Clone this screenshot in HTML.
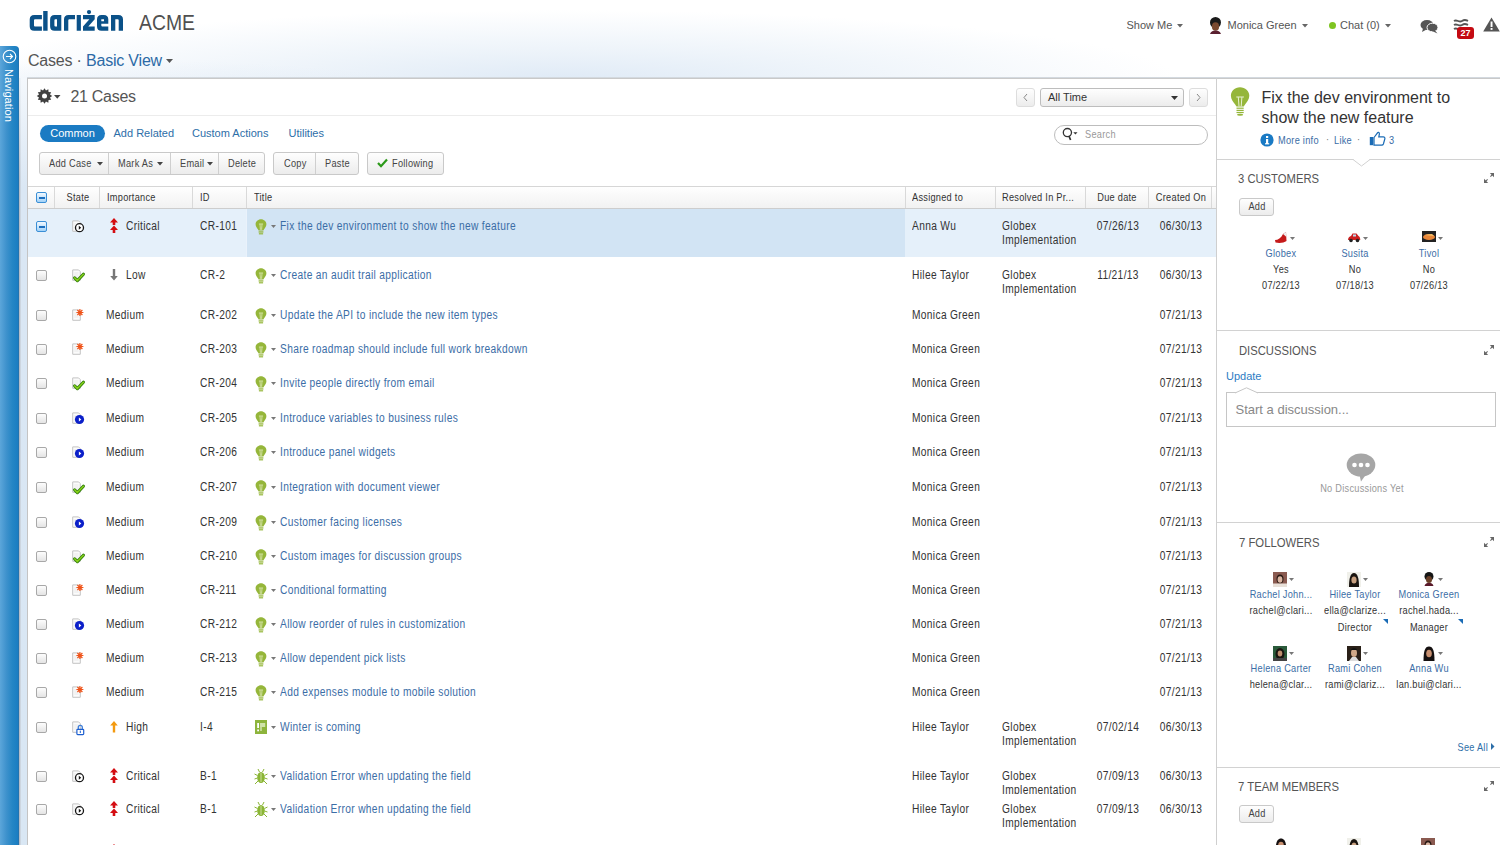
<!DOCTYPE html><html><head><meta charset="utf-8"><style>
html,body{margin:0;padding:0;}
body{width:1500px;height:845px;overflow:hidden;position:relative;background:#fff;font-family:"Liberation Sans", sans-serif;}
.a{position:absolute;}
.t{white-space:nowrap;}
.cb{position:absolute;width:9px;height:9px;border:1px solid #a8a8a8;border-radius:2px;background:linear-gradient(#fdfdfd,#e4e4e4);}
.btn{position:absolute;border:1px solid #c9c9c9;border-radius:3px;background:linear-gradient(#fefefe,#ececec);box-sizing:border-box;}
</style></head><body>
<div class="a" style="left:0px;top:0px;width:1500px;height:78px;background:radial-gradient(ellipse 620px 70px at 560px 80px, #dfeaf6 0%, #eef4fa 45%, rgba(255,255,255,0) 100%);"></div>
<div class="a" style="left:0px;top:30px;width:1500px;height:48px;background:radial-gradient(ellipse 380px 50px at 120px 80px, rgba(223,234,246,0.9) 0%, rgba(255,255,255,0) 100%);"></div>
<div class="a" style="left:19px;top:78px;width:8px;height:767px;background:linear-gradient(#f4f8fc 0px,#dae7f4 110px,#d9e7f4 100%);"></div>
<div class="a" style="left:19px;top:78px;width:1px;height:767px;background:linear-gradient(#e8eef4 0px,#b4bdc8 100px);"></div>
<div class="a" style="left:20px;top:78px;width:1px;height:767px;background:linear-gradient(#eef3f8 0px,#cdd6e0 100px);"></div>
<div class="a" style="left:0px;top:46px;width:19px;height:799px;background:linear-gradient(90deg,#5ca6da 0%,#3d91cc 35%,#2586c5 65%,#1a7dc2 95%,#2d6a9a 100%);border-top-right-radius:4px;"></div>
<svg class="a" style="left:2px;top:49px" width="15" height="15" viewBox="0 0 15 15"><circle cx="7.5" cy="7.5" r="6.3" fill="none" stroke="#fff" stroke-width="1.1"/><path d="M4 7.5h6.5M8 5l2.5 2.5L8 10" fill="none" stroke="#fff" stroke-width="1.1"/></svg>
<div class="a t" style="left:3px;top:69px;width:14px;height:60px;"><div style="position:absolute;left:0;top:0;transform-origin:0 0;transform:translate(11.5px,0) rotate(90deg);font-size:11px;line-height:13px;letter-spacing:0.1px;color:#fff;">Navigation</div></div>
<svg class="a" style="left:26px;top:6px" width="100" height="30" viewBox="0 0 100 30"><path fill="#0b5188" fill-rule="evenodd" d="M15.9 9 H8.2 Q3.7 9 3.7 13.5 V20.3 Q3.7 24.8 8.2 24.8 H15.9 V20.5 H9 Q8 20.5 8 19.5 V14.3 Q8 13.3 9 13.3 H15.9z M17.2 5 H21.6 V24.8 H17.2z M35.3 9 H28.6 Q24.1 9 24.1 13.5 V20.3 Q24.1 24.8 28.6 24.8 H35.3z M28.4 14.3 Q28.4 13.3 29.4 13.3 H31 V20.5 H29.4 Q28.4 20.5 28.4 19.5z M38 24.8 V13.5 Q38 9 42.5 9 H49 V13.3 H43.3 Q42.3 13.3 42.3 14.3 V24.8z M50.7 9 H54.9 V24.8 H50.7z M57 9 H68.7 V13.3 L62.3 20.5 H68.7 V24.8 H57 V20.5 L63.4 13.3 H57z M82.3 17.8 V13.5 Q82.3 9 77.8 9 H75.5 Q71 9 71 13.5 V20.3 Q71 24.8 75.5 24.8 H82.3 V20.5 H76.3 Q75.3 20.5 75.3 19.5 V17.8z M75.3 13.3 H78 V15.2 H75.3z M85 24.8 V9 H92.5 Q97 9 97 13.5 V24.8 H92.7 V14.3 Q92.7 13.3 91.7 13.3 H89.3 V24.8z"/><circle cx="63" cy="6.1" r="2.1" fill="#0b5188"/></svg>
<div class="a t" style="left:138.5px;top:10.0px;font-size:22px;line-height:26px;color:#505050;font-weight:normal;transform:scaleX(0.88);transform-origin:0 0;">ACME</div>
<div class="a t" style="left:28px;top:51.0px;font-size:16px;line-height:20px;color:#555;font-weight:normal;letter-spacing:-0.2px;">Cases · <span style="color:#2c6aa6">Basic View</span></div>
<svg class="a" style="left:166px;top:59px" width="7" height="5" viewBox="0 0 7 5"><path d="M0 0 H7 L3.5 4.06z" fill="#555"/></svg>
<div class="a t" style="left:1126.5px;top:18.0px;font-size:11px;line-height:14px;color:#555;font-weight:normal;">Show Me</div>
<svg class="a" style="left:1177px;top:24px" width="6" height="4" viewBox="0 0 6 4"><path d="M0 0 H6 L3.0 3.48z" fill="#666"/></svg>
<svg class="a" style="left:1207px;top:17px" width="17" height="17" viewBox="0 0 17 17"><circle cx="8.5" cy="5.5" r="5.5" fill="#1a1a1a"/><ellipse cx="8.5" cy="9.5" rx="3.6" ry="4.3" fill="#7a4a30"/><path d="M3 17c1-3 3-3.5 5.5-3.5S13 14 14 17z" fill="#5a2030"/></svg>
<div class="a t" style="left:1227.5px;top:18.0px;font-size:11px;line-height:14px;color:#555;font-weight:normal;">Monica Green</div>
<svg class="a" style="left:1302px;top:24px" width="6" height="4" viewBox="0 0 6 4"><path d="M0 0 H6 L3.0 3.48z" fill="#666"/></svg>
<div class="a" style="left:1329px;top:21.5px;width:7px;height:7px;background:#7ec421;border-radius:50%;"></div>
<div class="a t" style="left:1340px;top:18.0px;font-size:11px;line-height:14px;color:#555;font-weight:normal;">Chat (0)</div>
<svg class="a" style="left:1385px;top:24px" width="6" height="4" viewBox="0 0 6 4"><path d="M0 0 H6 L3.0 3.48z" fill="#666"/></svg>
<svg class="a" style="left:1420px;top:19px" width="19" height="15" viewBox="0 0 19 15"><ellipse cx="7" cy="6" rx="6.5" ry="5" fill="#555"/><path d="M3 9.5 L2 13 L6.5 10.5z" fill="#555"/><ellipse cx="12.5" cy="8.5" rx="5.5" ry="4.3" fill="#555" stroke="#fff" stroke-width="1"/><path d="M15 11.5 L17.5 14.5 L12 12z" fill="#555"/></svg>
<svg class="a" style="left:1453px;top:18px" width="16" height="14" viewBox="0 0 16 14"><path d="M1 3c3-2 5 2 8 0s4-1 6 0M1 7c3-2 5 2 8 0s4-1 6 0M1 11c3-2 5 2 8 0" fill="none" stroke="#555" stroke-width="1.8"/></svg>
<div class="a" style="left:1457px;top:27px;width:17px;height:12px;background:#c40a12;border-radius:3px;"></div>
<div class="a t" style="left:1315.5px;width:300px;text-align:center;top:27.5px;font-size:9px;line-height:11px;color:#fff;font-weight:bold;">27</div>
<svg class="a" style="left:1483px;top:17px" width="17" height="15" viewBox="0 0 17 15"><path d="M8.5 0.5 L16.8 14.5 H0.2z" fill="#555"/><rect x="7.6" y="4.5" width="1.9" height="5.5" fill="#fff"/><rect x="7.6" y="11" width="1.9" height="1.9" fill="#fff"/></svg>
<div class="a" style="left:27px;top:78px;width:1473px;height:767px;background:#fff;"></div>
<div class="a" style="left:27px;top:77px;width:1473px;height:1px;background:#d3d9df;"></div>
<div class="a" style="left:27px;top:78px;width:1473px;height:1px;background:#c9c9c9;"></div>
<div class="a" style="left:27px;top:78px;width:1px;height:767px;background:#c4c4c4;"></div>
<div class="a" style="left:1216px;top:78px;width:1px;height:767px;background:#cfcfcf;"></div>
<svg class="a" style="left:36px;top:88px" width="17" height="17" viewBox="0 0 17 17"><polygon points="8.50,0.30 9.98,2.49 12.35,1.33 12.53,3.97 15.17,4.15 14.01,6.52 16.20,8.00 14.01,9.48 15.17,11.85 12.53,12.03 12.35,14.67 9.98,13.51 8.50,15.70 7.02,13.51 4.65,14.67 4.47,12.03 1.83,11.85 2.99,9.48 0.80,8.00 2.99,6.52 1.83,4.15 4.47,3.97 4.65,1.33 7.02,2.49" fill="#404040"/><circle cx="8.5" cy="8" r="2.5" fill="#fff"/></svg>
<svg class="a" style="left:54px;top:95px" width="6.5" height="4" viewBox="0 0 6.5 4"><path d="M0 0 H6.5 L3.25 3.77z" fill="#444"/></svg>
<div class="a t" style="left:70.5px;top:87.0px;font-size:16px;line-height:20px;color:#555;font-weight:normal;letter-spacing:-0.3px;">21 Cases</div>
<div class="btn" style="left:1016px;top:88px;width:19px;height:19px;border-color:#ddd;"></div>
<svg class="a" style="left:1022px;top:93px" width="7" height="9" viewBox="0 0 7 9"><path d="M5 1 L2 4.5 L5 8" fill="none" stroke="#888" stroke-width="1"/></svg>
<div class="btn" style="left:1040px;top:88px;width:144px;height:19px;border-color:#bdbdbd;"></div>
<div class="a t" style="left:1048px;top:90.0px;font-size:11px;line-height:14px;color:#333;font-weight:normal;">All Time</div>
<svg class="a" style="left:1171px;top:96px" width="7" height="5" viewBox="0 0 7 5"><path d="M0 0 H7 L3.5 4.06z" fill="#333"/></svg>
<div class="btn" style="left:1189px;top:88px;width:19px;height:19px;border-color:#ddd;"></div>
<svg class="a" style="left:1195px;top:93px" width="7" height="9" viewBox="0 0 7 9"><path d="M2 1 L5 4.5 L2 8" fill="none" stroke="#888" stroke-width="1"/></svg>
<div class="a" style="left:28px;top:115px;width:1188px;height:1px;background:#ececec;"></div>
<div class="a" style="left:40px;top:125px;width:65px;height:17px;background:#1b7bc3;border-radius:9px;"></div>
<div class="a t" style="left:-77.5px;width:300px;text-align:center;top:125.5px;font-size:11px;line-height:14px;color:#fff;font-weight:normal;">Common</div>
<div class="a t" style="left:113.5px;top:125.5px;font-size:11px;line-height:14px;color:#2d6ea8;font-weight:normal;">Add Related</div>
<div class="a t" style="left:192px;top:125.5px;font-size:11px;line-height:14px;color:#2d6ea8;font-weight:normal;">Custom Actions</div>
<div class="a t" style="left:288.5px;top:125.5px;font-size:11px;line-height:14px;color:#2d6ea8;font-weight:normal;">Utilities</div>
<div class="a" style="left:1054px;top:125px;width:154px;height:20px;border:1px solid #bdbdbd;border-radius:10px;box-sizing:border-box;background:#fff;"></div>
<svg class="a" style="left:1061px;top:127px" width="18" height="15" viewBox="0 0 18 15"><circle cx="6.4" cy="5.6" r="4.1" fill="none" stroke="#333" stroke-width="1.3"/><path d="M8 9.2 L9.6 13" stroke="#333" stroke-width="1.7"/><path d="M12.3 5.2 h4.2 l-2.1 2.3z" fill="#333"/></svg>
<div class="a t" style="left:1085px;top:127.8px;font-size:10px;line-height:13px;color:#999;font-weight:normal;font-size:10.6px;letter-spacing:0.3px;transform:scaleX(0.87);transform-origin:0 0;">Search</div>
<div class="btn" style="left:39px;top:152px;width:226px;height:23px;"></div><div class="a" style="left:108px;top:153px;width:1px;height:21px;background:#cfcfcf;"></div><div class="a" style="left:170px;top:153px;width:1px;height:21px;background:#cfcfcf;"></div><div class="a" style="left:218px;top:153px;width:1px;height:21px;background:#cfcfcf;"></div>
<div class="a t" style="left:48.8px;top:156.8px;font-size:10px;line-height:13px;color:#444;font-weight:normal;font-size:10.6px;letter-spacing:0.3px;transform:scaleX(0.87);transform-origin:0 0;">Add Case</div>
<svg class="a" style="left:96.5px;top:162px" width="6" height="4" viewBox="0 0 6 4"><path d="M0 0 H6 L3.0 3.48z" fill="#444"/></svg>
<div class="a t" style="left:118px;top:156.8px;font-size:10px;line-height:13px;color:#444;font-weight:normal;font-size:10.6px;letter-spacing:0.3px;transform:scaleX(0.87);transform-origin:0 0;">Mark As</div>
<svg class="a" style="left:157px;top:162px" width="6" height="4" viewBox="0 0 6 4"><path d="M0 0 H6 L3.0 3.48z" fill="#444"/></svg>
<div class="a t" style="left:180px;top:156.8px;font-size:10px;line-height:13px;color:#444;font-weight:normal;font-size:10.6px;letter-spacing:0.3px;transform:scaleX(0.87);transform-origin:0 0;">Email</div>
<svg class="a" style="left:207px;top:162px" width="6" height="4" viewBox="0 0 6 4"><path d="M0 0 H6 L3.0 3.48z" fill="#444"/></svg>
<div class="a t" style="left:228px;top:156.8px;font-size:10px;line-height:13px;color:#444;font-weight:normal;font-size:10.6px;letter-spacing:0.3px;transform:scaleX(0.87);transform-origin:0 0;">Delete</div>
<div class="btn" style="left:273px;top:152px;width:86px;height:23px;"></div><div class="a" style="left:315px;top:153px;width:1px;height:21px;background:#cfcfcf;"></div>
<div class="a t" style="left:283.5px;top:156.8px;font-size:10px;line-height:13px;color:#444;font-weight:normal;font-size:10.6px;letter-spacing:0.3px;transform:scaleX(0.87);transform-origin:0 0;">Copy</div>
<div class="a t" style="left:324.5px;top:156.8px;font-size:10px;line-height:13px;color:#444;font-weight:normal;font-size:10.6px;letter-spacing:0.3px;transform:scaleX(0.87);transform-origin:0 0;">Paste</div>
<div class="btn" style="left:367px;top:152px;width:77px;height:23px;"></div>
<svg class="a" style="left:377px;top:158px" width="11" height="10" viewBox="0 0 11 10"><path d="M1 5 L4 8.2 L10 1.5" fill="none" stroke="#2c9a1a" stroke-width="2.2"/></svg>
<div class="a t" style="left:392.3px;top:156.8px;font-size:10px;line-height:13px;color:#444;font-weight:normal;font-size:10.6px;letter-spacing:0.3px;transform:scaleX(0.87);transform-origin:0 0;">Following</div>
<div class="a" style="left:28px;top:186px;width:1188px;height:23px;background:linear-gradient(#ffffff,#f1f1f1);"></div>
<div class="a" style="left:28px;top:186px;width:1188px;height:1px;background:#d6d6d6;"></div>
<div class="a" style="left:28px;top:208px;width:1188px;height:1px;background:#cdcdcd;"></div>
<div class="a" style="left:54px;top:187px;width:1px;height:21px;background:#d9d9d9;"></div>
<div class="a" style="left:99px;top:187px;width:1px;height:21px;background:#d9d9d9;"></div>
<div class="a" style="left:192px;top:187px;width:1px;height:21px;background:#d9d9d9;"></div>
<div class="a" style="left:246px;top:187px;width:1px;height:21px;background:#d9d9d9;"></div>
<div class="a" style="left:905px;top:187px;width:1px;height:21px;background:#d9d9d9;"></div>
<div class="a" style="left:995px;top:187px;width:1px;height:21px;background:#d9d9d9;"></div>
<div class="a" style="left:1085px;top:187px;width:1px;height:21px;background:#d9d9d9;"></div>
<div class="a" style="left:1148px;top:187px;width:1px;height:21px;background:#d9d9d9;"></div>
<div class="a" style="left:1211px;top:187px;width:1px;height:21px;background:#d9d9d9;"></div>
<div class="a" style="left:36px;top:192px;width:11px;height:11px;border:1px solid #3a8fd6;border-radius:2px;box-sizing:border-box;background:linear-gradient(#f2f9ff,#a3d2f7);"></div>
<div class="a" style="left:38.5px;top:197px;width:6px;height:1.6px;background:#1c6fbf;"></div>
<div class="a t" style="left:-72px;width:300px;text-align:center;top:190.8px;font-size:10px;line-height:13px;color:#333;font-weight:normal;font-size:10.6px;letter-spacing:0.3px;transform:scaleX(0.87);transform-origin:50% 0;">State</div>
<div class="a t" style="left:106.5px;top:190.8px;font-size:10px;line-height:13px;color:#333;font-weight:normal;font-size:10.6px;letter-spacing:0.3px;transform:scaleX(0.87);transform-origin:0 0;">Importance</div>
<div class="a t" style="left:199.5px;top:190.8px;font-size:10px;line-height:13px;color:#333;font-weight:normal;font-size:10.6px;letter-spacing:0.3px;transform:scaleX(0.87);transform-origin:0 0;">ID</div>
<div class="a t" style="left:253.5px;top:190.8px;font-size:10px;line-height:13px;color:#333;font-weight:normal;font-size:10.6px;letter-spacing:0.3px;transform:scaleX(0.87);transform-origin:0 0;">Title</div>
<div class="a t" style="left:912px;top:190.8px;font-size:10px;line-height:13px;color:#333;font-weight:normal;font-size:10.6px;letter-spacing:0.3px;transform:scaleX(0.87);transform-origin:0 0;">Assigned to</div>
<div class="a t" style="left:1002px;top:190.8px;font-size:10px;line-height:13px;color:#333;font-weight:normal;font-size:10.6px;letter-spacing:0.3px;transform:scaleX(0.87);transform-origin:0 0;">Resolved In Pr...</div>
<div class="a t" style="left:966.5px;width:300px;text-align:center;top:190.8px;font-size:10px;line-height:13px;color:#333;font-weight:normal;font-size:10.6px;letter-spacing:0.3px;transform:scaleX(0.87);transform-origin:50% 0;">Due date</div>
<div class="a t" style="left:1030.5px;width:300px;text-align:center;top:190.8px;font-size:10px;line-height:13px;color:#333;font-weight:normal;font-size:10.6px;letter-spacing:0.3px;transform:scaleX(0.87);transform-origin:50% 0;">Created On</div>
<div class="a" style="left:28px;top:209px;width:1188px;height:48px;background:#e5f0fa;"></div>
<div class="a" style="left:247px;top:209px;width:658px;height:48px;background:#d2e4f4;"></div>
<div class="a" style="left:246px;top:209px;width:1px;height:48px;background:#eaf2fb;"></div>
<div class="a" style="left:36px;top:221px;width:11px;height:11px;border:1px solid #3a8fd6;border-radius:2px;box-sizing:border-box;background:linear-gradient(#f2f9ff,#a3d2f7);"></div>
<div class="a" style="left:38.5px;top:226px;width:6px;height:1.6px;background:#1c6fbf;"></div>
<svg class="a" style="left:70px;top:218px" width="16" height="17" viewBox="0 0 16 17"><path d="M2.7 2.9 H8.6 L10.3 4.6 V13.3 H2.7z" fill="#fbfbfb" stroke="#c4c4c4" stroke-width="1"/><path d="M4.2 6 H8.5 M4.2 8 H8.5 M4.2 10 H8.5" stroke="#e6e6e6" stroke-width="0.8"/><circle cx="9.5" cy="9.7" r="4" fill="#fff" stroke="#151515" stroke-width="1.3"/><path d="M8.8 7.7 L11.2 9.7 L8.8 11.7z" fill="#111"/></svg>
<svg class="a" style="left:110px;top:218px" width="8" height="16" viewBox="0 0 8 16"><path d="M4 0 L8 4.5 H5.3 V7 H2.7 V4.5 H0z" fill="#d40d12"/><path d="M4 7.5 L8 12 H5.3 V15 H2.7 V12 H0z" fill="#d40d12"/></svg>
<div class="a t" style="left:125.5px;top:218.5px;font-size:12px;line-height:14px;letter-spacing:0.4px;color:#333;transform:scaleX(0.85);transform-origin:0 0;">Critical</div>
<div class="a t" style="left:199.5px;top:218.5px;font-size:12px;line-height:14px;letter-spacing:0.4px;color:#333;transform:scaleX(0.85);transform-origin:0 0;">CR-101</div>
<svg class="a" style="left:255px;top:219px" width="12" height="16" viewBox="0 0 12 16"><path d="M6 0.2 C3 0.2 0.6 2.5 0.6 5.3 C0.6 7.6 2 8.9 2.9 10.3 L3.6 11.6 H8.4 L9.1 10.3 C10 8.9 11.4 7.6 11.4 5.3 C11.4 2.5 9 0.2 6 0.2z" fill="#95b63a"/><path d="M3.9 5 H8.1 M5 5.2 L5.4 10.8 M7 5.2 L6.6 10.8" stroke="#dfeab8" stroke-width="0.8" fill="none"/><rect x="3.6" y="12.3" width="4.8" height="1.3" fill="#95b63a"/><rect x="3.9" y="14.2" width="4.2" height="1.2" fill="#95b63a"/></svg><svg class="a" style="left:270.5px;top:225px" width="5" height="4" viewBox="0 0 5 4"><path d="M0 0 H5 L2.5 2.90z" fill="#777"/></svg>
<div class="a t" style="left:280px;top:218.5px;font-size:12px;line-height:14px;letter-spacing:0.4px;color:#3b6da6;transform:scaleX(0.85);transform-origin:0 0;">Fix the dev environment to show the new feature</div>
<div class="a t" style="left:912px;top:218.5px;font-size:12px;line-height:14px;letter-spacing:0.4px;color:#333;transform:scaleX(0.85);transform-origin:0 0;">Anna Wu</div>
<div class="a t" style="left:1002px;top:218.5px;font-size:12px;line-height:14px;letter-spacing:0.4px;color:#333;transform:scaleX(0.85);transform-origin:0 0;">Globex</div>
<div class="a t" style="left:1002px;top:233.0px;font-size:12px;line-height:14px;letter-spacing:0.4px;color:#333;transform:scaleX(0.85);transform-origin:0 0;">Implementation</div>
<div class="a t" style="left:967.5px;width:300px;text-align:center;top:218.5px;font-size:12px;line-height:14px;letter-spacing:0.4px;color:#333;transform:scaleX(0.85);transform-origin:50% 0;">07/26/13</div>
<div class="a t" style="left:1030.5px;width:300px;text-align:center;top:218.5px;font-size:12px;line-height:14px;letter-spacing:0.4px;color:#333;transform:scaleX(0.85);transform-origin:50% 0;">06/30/13</div>
<div class="cb" style="left:36px;top:270px"></div>
<svg class="a" style="left:70px;top:267px" width="16" height="17" viewBox="0 0 16 17"><path d="M2.7 2.9 H8.6 L10.3 4.6 V13.3 H2.7z" fill="#fbfbfb" stroke="#c4c4c4" stroke-width="1"/><path d="M4.2 6 H8.5 M4.2 8 H8.5 M4.2 10 H8.5" stroke="#e6e6e6" stroke-width="0.8"/><path d="M4.6 10.8 L7.4 13.6 L13.4 7.2" fill="none" stroke="#2c7a08" stroke-width="3.1" stroke-linecap="round" stroke-linejoin="round"/><path d="M4.6 10.8 L7.4 13.6 L13.4 7.2" fill="none" stroke="#86d01a" stroke-width="1.5" stroke-linecap="round" stroke-linejoin="round"/></svg>
<svg class="a" style="left:110px;top:269px" width="8" height="12" viewBox="0 0 8 12"><path d="M2.8 0 H5.2 V7 H7.8 L4 11.5 L0.2 7 H2.8z" fill="#777"/></svg>
<div class="a t" style="left:125.5px;top:267.5px;font-size:12px;line-height:14px;letter-spacing:0.4px;color:#333;transform:scaleX(0.85);transform-origin:0 0;">Low</div>
<div class="a t" style="left:199.5px;top:267.5px;font-size:12px;line-height:14px;letter-spacing:0.4px;color:#333;transform:scaleX(0.85);transform-origin:0 0;">CR-2</div>
<svg class="a" style="left:255px;top:268px" width="12" height="16" viewBox="0 0 12 16"><path d="M6 0.2 C3 0.2 0.6 2.5 0.6 5.3 C0.6 7.6 2 8.9 2.9 10.3 L3.6 11.6 H8.4 L9.1 10.3 C10 8.9 11.4 7.6 11.4 5.3 C11.4 2.5 9 0.2 6 0.2z" fill="#95b63a"/><path d="M3.9 5 H8.1 M5 5.2 L5.4 10.8 M7 5.2 L6.6 10.8" stroke="#dfeab8" stroke-width="0.8" fill="none"/><rect x="3.6" y="12.3" width="4.8" height="1.3" fill="#95b63a"/><rect x="3.9" y="14.2" width="4.2" height="1.2" fill="#95b63a"/></svg><svg class="a" style="left:270.5px;top:274px" width="5" height="4" viewBox="0 0 5 4"><path d="M0 0 H5 L2.5 2.90z" fill="#777"/></svg>
<div class="a t" style="left:280px;top:267.5px;font-size:12px;line-height:14px;letter-spacing:0.4px;color:#3b6da6;transform:scaleX(0.85);transform-origin:0 0;">Create an audit trail application</div>
<div class="a t" style="left:912px;top:267.5px;font-size:12px;line-height:14px;letter-spacing:0.4px;color:#333;transform:scaleX(0.85);transform-origin:0 0;">Hilee Taylor</div>
<div class="a t" style="left:1002px;top:267.5px;font-size:12px;line-height:14px;letter-spacing:0.4px;color:#333;transform:scaleX(0.85);transform-origin:0 0;">Globex</div>
<div class="a t" style="left:1002px;top:282.0px;font-size:12px;line-height:14px;letter-spacing:0.4px;color:#333;transform:scaleX(0.85);transform-origin:0 0;">Implementation</div>
<div class="a t" style="left:967.5px;width:300px;text-align:center;top:267.5px;font-size:12px;line-height:14px;letter-spacing:0.4px;color:#333;transform:scaleX(0.85);transform-origin:50% 0;">11/21/13</div>
<div class="a t" style="left:1030.5px;width:300px;text-align:center;top:267.5px;font-size:12px;line-height:14px;letter-spacing:0.4px;color:#333;transform:scaleX(0.85);transform-origin:50% 0;">06/30/13</div>
<div class="cb" style="left:36px;top:310px"></div>
<svg class="a" style="left:70px;top:307px" width="16" height="17" viewBox="0 0 16 17"><path d="M2.7 2.9 H8.6 L10.3 4.6 V13.3 H2.7z" fill="#fbfbfb" stroke="#c4c4c4" stroke-width="1"/><path d="M4.2 6 H8.5 M4.2 8 H8.5 M4.2 10 H8.5" stroke="#e6e6e6" stroke-width="0.8"/><g stroke="#f0541a" stroke-width="1.2"><path d="M9.9 2 V9 M6.4 5.5 H13.4 M7.4 3 L12.4 8 M12.4 3 L7.4 8"/></g><circle cx="9.9" cy="5.5" r="1.6" fill="#f0541a"/></svg>

<div class="a t" style="left:106.4px;top:307.5px;font-size:12px;line-height:14px;letter-spacing:0.4px;color:#333;transform:scaleX(0.85);transform-origin:0 0;">Medium</div>
<div class="a t" style="left:199.5px;top:307.5px;font-size:12px;line-height:14px;letter-spacing:0.4px;color:#333;transform:scaleX(0.85);transform-origin:0 0;">CR-202</div>
<svg class="a" style="left:255px;top:308px" width="12" height="16" viewBox="0 0 12 16"><path d="M6 0.2 C3 0.2 0.6 2.5 0.6 5.3 C0.6 7.6 2 8.9 2.9 10.3 L3.6 11.6 H8.4 L9.1 10.3 C10 8.9 11.4 7.6 11.4 5.3 C11.4 2.5 9 0.2 6 0.2z" fill="#95b63a"/><path d="M3.9 5 H8.1 M5 5.2 L5.4 10.8 M7 5.2 L6.6 10.8" stroke="#dfeab8" stroke-width="0.8" fill="none"/><rect x="3.6" y="12.3" width="4.8" height="1.3" fill="#95b63a"/><rect x="3.9" y="14.2" width="4.2" height="1.2" fill="#95b63a"/></svg><svg class="a" style="left:270.5px;top:314px" width="5" height="4" viewBox="0 0 5 4"><path d="M0 0 H5 L2.5 2.90z" fill="#777"/></svg>
<div class="a t" style="left:280px;top:307.5px;font-size:12px;line-height:14px;letter-spacing:0.4px;color:#3b6da6;transform:scaleX(0.85);transform-origin:0 0;">Update the API to include the new item types</div>
<div class="a t" style="left:912px;top:307.5px;font-size:12px;line-height:14px;letter-spacing:0.4px;color:#333;transform:scaleX(0.85);transform-origin:0 0;">Monica Green</div>
<div class="a t" style="left:1030.5px;width:300px;text-align:center;top:307.5px;font-size:12px;line-height:14px;letter-spacing:0.4px;color:#333;transform:scaleX(0.85);transform-origin:50% 0;">07/21/13</div>
<div class="cb" style="left:36px;top:344px"></div>
<svg class="a" style="left:70px;top:341px" width="16" height="17" viewBox="0 0 16 17"><path d="M2.7 2.9 H8.6 L10.3 4.6 V13.3 H2.7z" fill="#fbfbfb" stroke="#c4c4c4" stroke-width="1"/><path d="M4.2 6 H8.5 M4.2 8 H8.5 M4.2 10 H8.5" stroke="#e6e6e6" stroke-width="0.8"/><g stroke="#f0541a" stroke-width="1.2"><path d="M9.9 2 V9 M6.4 5.5 H13.4 M7.4 3 L12.4 8 M12.4 3 L7.4 8"/></g><circle cx="9.9" cy="5.5" r="1.6" fill="#f0541a"/></svg>

<div class="a t" style="left:106.4px;top:341.5px;font-size:12px;line-height:14px;letter-spacing:0.4px;color:#333;transform:scaleX(0.85);transform-origin:0 0;">Medium</div>
<div class="a t" style="left:199.5px;top:341.5px;font-size:12px;line-height:14px;letter-spacing:0.4px;color:#333;transform:scaleX(0.85);transform-origin:0 0;">CR-203</div>
<svg class="a" style="left:255px;top:342px" width="12" height="16" viewBox="0 0 12 16"><path d="M6 0.2 C3 0.2 0.6 2.5 0.6 5.3 C0.6 7.6 2 8.9 2.9 10.3 L3.6 11.6 H8.4 L9.1 10.3 C10 8.9 11.4 7.6 11.4 5.3 C11.4 2.5 9 0.2 6 0.2z" fill="#95b63a"/><path d="M3.9 5 H8.1 M5 5.2 L5.4 10.8 M7 5.2 L6.6 10.8" stroke="#dfeab8" stroke-width="0.8" fill="none"/><rect x="3.6" y="12.3" width="4.8" height="1.3" fill="#95b63a"/><rect x="3.9" y="14.2" width="4.2" height="1.2" fill="#95b63a"/></svg><svg class="a" style="left:270.5px;top:348px" width="5" height="4" viewBox="0 0 5 4"><path d="M0 0 H5 L2.5 2.90z" fill="#777"/></svg>
<div class="a t" style="left:280px;top:341.5px;font-size:12px;line-height:14px;letter-spacing:0.4px;color:#3b6da6;transform:scaleX(0.85);transform-origin:0 0;">Share roadmap should include full work breakdown</div>
<div class="a t" style="left:912px;top:341.5px;font-size:12px;line-height:14px;letter-spacing:0.4px;color:#333;transform:scaleX(0.85);transform-origin:0 0;">Monica Green</div>
<div class="a t" style="left:1030.5px;width:300px;text-align:center;top:341.5px;font-size:12px;line-height:14px;letter-spacing:0.4px;color:#333;transform:scaleX(0.85);transform-origin:50% 0;">07/21/13</div>
<div class="cb" style="left:36px;top:378px"></div>
<svg class="a" style="left:70px;top:375px" width="16" height="17" viewBox="0 0 16 17"><path d="M2.7 2.9 H8.6 L10.3 4.6 V13.3 H2.7z" fill="#fbfbfb" stroke="#c4c4c4" stroke-width="1"/><path d="M4.2 6 H8.5 M4.2 8 H8.5 M4.2 10 H8.5" stroke="#e6e6e6" stroke-width="0.8"/><path d="M4.6 10.8 L7.4 13.6 L13.4 7.2" fill="none" stroke="#2c7a08" stroke-width="3.1" stroke-linecap="round" stroke-linejoin="round"/><path d="M4.6 10.8 L7.4 13.6 L13.4 7.2" fill="none" stroke="#86d01a" stroke-width="1.5" stroke-linecap="round" stroke-linejoin="round"/></svg>

<div class="a t" style="left:106.4px;top:375.5px;font-size:12px;line-height:14px;letter-spacing:0.4px;color:#333;transform:scaleX(0.85);transform-origin:0 0;">Medium</div>
<div class="a t" style="left:199.5px;top:375.5px;font-size:12px;line-height:14px;letter-spacing:0.4px;color:#333;transform:scaleX(0.85);transform-origin:0 0;">CR-204</div>
<svg class="a" style="left:255px;top:376px" width="12" height="16" viewBox="0 0 12 16"><path d="M6 0.2 C3 0.2 0.6 2.5 0.6 5.3 C0.6 7.6 2 8.9 2.9 10.3 L3.6 11.6 H8.4 L9.1 10.3 C10 8.9 11.4 7.6 11.4 5.3 C11.4 2.5 9 0.2 6 0.2z" fill="#95b63a"/><path d="M3.9 5 H8.1 M5 5.2 L5.4 10.8 M7 5.2 L6.6 10.8" stroke="#dfeab8" stroke-width="0.8" fill="none"/><rect x="3.6" y="12.3" width="4.8" height="1.3" fill="#95b63a"/><rect x="3.9" y="14.2" width="4.2" height="1.2" fill="#95b63a"/></svg><svg class="a" style="left:270.5px;top:382px" width="5" height="4" viewBox="0 0 5 4"><path d="M0 0 H5 L2.5 2.90z" fill="#777"/></svg>
<div class="a t" style="left:280px;top:375.5px;font-size:12px;line-height:14px;letter-spacing:0.4px;color:#3b6da6;transform:scaleX(0.85);transform-origin:0 0;">Invite people directly from email</div>
<div class="a t" style="left:912px;top:375.5px;font-size:12px;line-height:14px;letter-spacing:0.4px;color:#333;transform:scaleX(0.85);transform-origin:0 0;">Monica Green</div>
<div class="a t" style="left:1030.5px;width:300px;text-align:center;top:375.5px;font-size:12px;line-height:14px;letter-spacing:0.4px;color:#333;transform:scaleX(0.85);transform-origin:50% 0;">07/21/13</div>
<div class="cb" style="left:36px;top:413px"></div>
<svg class="a" style="left:70px;top:410px" width="16" height="17" viewBox="0 0 16 17"><path d="M2.7 2.9 H8.6 L10.3 4.6 V13.3 H2.7z" fill="#fbfbfb" stroke="#c4c4c4" stroke-width="1"/><path d="M4.2 6 H8.5 M4.2 8 H8.5 M4.2 10 H8.5" stroke="#e6e6e6" stroke-width="0.8"/><circle cx="9.5" cy="9.5" r="4.6" fill="#0b1fc9"/><path d="M8.9 7.5 L11.3 9.5 L8.9 11.5z" fill="#fff"/></svg>

<div class="a t" style="left:106.4px;top:410.5px;font-size:12px;line-height:14px;letter-spacing:0.4px;color:#333;transform:scaleX(0.85);transform-origin:0 0;">Medium</div>
<div class="a t" style="left:199.5px;top:410.5px;font-size:12px;line-height:14px;letter-spacing:0.4px;color:#333;transform:scaleX(0.85);transform-origin:0 0;">CR-205</div>
<svg class="a" style="left:255px;top:411px" width="12" height="16" viewBox="0 0 12 16"><path d="M6 0.2 C3 0.2 0.6 2.5 0.6 5.3 C0.6 7.6 2 8.9 2.9 10.3 L3.6 11.6 H8.4 L9.1 10.3 C10 8.9 11.4 7.6 11.4 5.3 C11.4 2.5 9 0.2 6 0.2z" fill="#95b63a"/><path d="M3.9 5 H8.1 M5 5.2 L5.4 10.8 M7 5.2 L6.6 10.8" stroke="#dfeab8" stroke-width="0.8" fill="none"/><rect x="3.6" y="12.3" width="4.8" height="1.3" fill="#95b63a"/><rect x="3.9" y="14.2" width="4.2" height="1.2" fill="#95b63a"/></svg><svg class="a" style="left:270.5px;top:417px" width="5" height="4" viewBox="0 0 5 4"><path d="M0 0 H5 L2.5 2.90z" fill="#777"/></svg>
<div class="a t" style="left:280px;top:410.5px;font-size:12px;line-height:14px;letter-spacing:0.4px;color:#3b6da6;transform:scaleX(0.85);transform-origin:0 0;">Introduce variables to business rules</div>
<div class="a t" style="left:912px;top:410.5px;font-size:12px;line-height:14px;letter-spacing:0.4px;color:#333;transform:scaleX(0.85);transform-origin:0 0;">Monica Green</div>
<div class="a t" style="left:1030.5px;width:300px;text-align:center;top:410.5px;font-size:12px;line-height:14px;letter-spacing:0.4px;color:#333;transform:scaleX(0.85);transform-origin:50% 0;">07/21/13</div>
<div class="cb" style="left:36px;top:447px"></div>
<svg class="a" style="left:70px;top:444px" width="16" height="17" viewBox="0 0 16 17"><path d="M2.7 2.9 H8.6 L10.3 4.6 V13.3 H2.7z" fill="#fbfbfb" stroke="#c4c4c4" stroke-width="1"/><path d="M4.2 6 H8.5 M4.2 8 H8.5 M4.2 10 H8.5" stroke="#e6e6e6" stroke-width="0.8"/><circle cx="9.5" cy="9.5" r="4.6" fill="#0b1fc9"/><path d="M8.9 7.5 L11.3 9.5 L8.9 11.5z" fill="#fff"/></svg>

<div class="a t" style="left:106.4px;top:444.5px;font-size:12px;line-height:14px;letter-spacing:0.4px;color:#333;transform:scaleX(0.85);transform-origin:0 0;">Medium</div>
<div class="a t" style="left:199.5px;top:444.5px;font-size:12px;line-height:14px;letter-spacing:0.4px;color:#333;transform:scaleX(0.85);transform-origin:0 0;">CR-206</div>
<svg class="a" style="left:255px;top:445px" width="12" height="16" viewBox="0 0 12 16"><path d="M6 0.2 C3 0.2 0.6 2.5 0.6 5.3 C0.6 7.6 2 8.9 2.9 10.3 L3.6 11.6 H8.4 L9.1 10.3 C10 8.9 11.4 7.6 11.4 5.3 C11.4 2.5 9 0.2 6 0.2z" fill="#95b63a"/><path d="M3.9 5 H8.1 M5 5.2 L5.4 10.8 M7 5.2 L6.6 10.8" stroke="#dfeab8" stroke-width="0.8" fill="none"/><rect x="3.6" y="12.3" width="4.8" height="1.3" fill="#95b63a"/><rect x="3.9" y="14.2" width="4.2" height="1.2" fill="#95b63a"/></svg><svg class="a" style="left:270.5px;top:451px" width="5" height="4" viewBox="0 0 5 4"><path d="M0 0 H5 L2.5 2.90z" fill="#777"/></svg>
<div class="a t" style="left:280px;top:444.5px;font-size:12px;line-height:14px;letter-spacing:0.4px;color:#3b6da6;transform:scaleX(0.85);transform-origin:0 0;">Introduce panel widgets</div>
<div class="a t" style="left:912px;top:444.5px;font-size:12px;line-height:14px;letter-spacing:0.4px;color:#333;transform:scaleX(0.85);transform-origin:0 0;">Monica Green</div>
<div class="a t" style="left:1030.5px;width:300px;text-align:center;top:444.5px;font-size:12px;line-height:14px;letter-spacing:0.4px;color:#333;transform:scaleX(0.85);transform-origin:50% 0;">07/21/13</div>
<div class="cb" style="left:36px;top:482px"></div>
<svg class="a" style="left:70px;top:479px" width="16" height="17" viewBox="0 0 16 17"><path d="M2.7 2.9 H8.6 L10.3 4.6 V13.3 H2.7z" fill="#fbfbfb" stroke="#c4c4c4" stroke-width="1"/><path d="M4.2 6 H8.5 M4.2 8 H8.5 M4.2 10 H8.5" stroke="#e6e6e6" stroke-width="0.8"/><path d="M4.6 10.8 L7.4 13.6 L13.4 7.2" fill="none" stroke="#2c7a08" stroke-width="3.1" stroke-linecap="round" stroke-linejoin="round"/><path d="M4.6 10.8 L7.4 13.6 L13.4 7.2" fill="none" stroke="#86d01a" stroke-width="1.5" stroke-linecap="round" stroke-linejoin="round"/></svg>

<div class="a t" style="left:106.4px;top:479.5px;font-size:12px;line-height:14px;letter-spacing:0.4px;color:#333;transform:scaleX(0.85);transform-origin:0 0;">Medium</div>
<div class="a t" style="left:199.5px;top:479.5px;font-size:12px;line-height:14px;letter-spacing:0.4px;color:#333;transform:scaleX(0.85);transform-origin:0 0;">CR-207</div>
<svg class="a" style="left:255px;top:480px" width="12" height="16" viewBox="0 0 12 16"><path d="M6 0.2 C3 0.2 0.6 2.5 0.6 5.3 C0.6 7.6 2 8.9 2.9 10.3 L3.6 11.6 H8.4 L9.1 10.3 C10 8.9 11.4 7.6 11.4 5.3 C11.4 2.5 9 0.2 6 0.2z" fill="#95b63a"/><path d="M3.9 5 H8.1 M5 5.2 L5.4 10.8 M7 5.2 L6.6 10.8" stroke="#dfeab8" stroke-width="0.8" fill="none"/><rect x="3.6" y="12.3" width="4.8" height="1.3" fill="#95b63a"/><rect x="3.9" y="14.2" width="4.2" height="1.2" fill="#95b63a"/></svg><svg class="a" style="left:270.5px;top:486px" width="5" height="4" viewBox="0 0 5 4"><path d="M0 0 H5 L2.5 2.90z" fill="#777"/></svg>
<div class="a t" style="left:280px;top:479.5px;font-size:12px;line-height:14px;letter-spacing:0.4px;color:#3b6da6;transform:scaleX(0.85);transform-origin:0 0;">Integration with document viewer</div>
<div class="a t" style="left:912px;top:479.5px;font-size:12px;line-height:14px;letter-spacing:0.4px;color:#333;transform:scaleX(0.85);transform-origin:0 0;">Monica Green</div>
<div class="a t" style="left:1030.5px;width:300px;text-align:center;top:479.5px;font-size:12px;line-height:14px;letter-spacing:0.4px;color:#333;transform:scaleX(0.85);transform-origin:50% 0;">07/21/13</div>
<div class="cb" style="left:36px;top:517px"></div>
<svg class="a" style="left:70px;top:514px" width="16" height="17" viewBox="0 0 16 17"><path d="M2.7 2.9 H8.6 L10.3 4.6 V13.3 H2.7z" fill="#fbfbfb" stroke="#c4c4c4" stroke-width="1"/><path d="M4.2 6 H8.5 M4.2 8 H8.5 M4.2 10 H8.5" stroke="#e6e6e6" stroke-width="0.8"/><circle cx="9.5" cy="9.5" r="4.6" fill="#0b1fc9"/><path d="M8.9 7.5 L11.3 9.5 L8.9 11.5z" fill="#fff"/></svg>

<div class="a t" style="left:106.4px;top:514.5px;font-size:12px;line-height:14px;letter-spacing:0.4px;color:#333;transform:scaleX(0.85);transform-origin:0 0;">Medium</div>
<div class="a t" style="left:199.5px;top:514.5px;font-size:12px;line-height:14px;letter-spacing:0.4px;color:#333;transform:scaleX(0.85);transform-origin:0 0;">CR-209</div>
<svg class="a" style="left:255px;top:515px" width="12" height="16" viewBox="0 0 12 16"><path d="M6 0.2 C3 0.2 0.6 2.5 0.6 5.3 C0.6 7.6 2 8.9 2.9 10.3 L3.6 11.6 H8.4 L9.1 10.3 C10 8.9 11.4 7.6 11.4 5.3 C11.4 2.5 9 0.2 6 0.2z" fill="#95b63a"/><path d="M3.9 5 H8.1 M5 5.2 L5.4 10.8 M7 5.2 L6.6 10.8" stroke="#dfeab8" stroke-width="0.8" fill="none"/><rect x="3.6" y="12.3" width="4.8" height="1.3" fill="#95b63a"/><rect x="3.9" y="14.2" width="4.2" height="1.2" fill="#95b63a"/></svg><svg class="a" style="left:270.5px;top:521px" width="5" height="4" viewBox="0 0 5 4"><path d="M0 0 H5 L2.5 2.90z" fill="#777"/></svg>
<div class="a t" style="left:280px;top:514.5px;font-size:12px;line-height:14px;letter-spacing:0.4px;color:#3b6da6;transform:scaleX(0.85);transform-origin:0 0;">Customer facing licenses</div>
<div class="a t" style="left:912px;top:514.5px;font-size:12px;line-height:14px;letter-spacing:0.4px;color:#333;transform:scaleX(0.85);transform-origin:0 0;">Monica Green</div>
<div class="a t" style="left:1030.5px;width:300px;text-align:center;top:514.5px;font-size:12px;line-height:14px;letter-spacing:0.4px;color:#333;transform:scaleX(0.85);transform-origin:50% 0;">07/21/13</div>
<div class="cb" style="left:36px;top:551px"></div>
<svg class="a" style="left:70px;top:548px" width="16" height="17" viewBox="0 0 16 17"><path d="M2.7 2.9 H8.6 L10.3 4.6 V13.3 H2.7z" fill="#fbfbfb" stroke="#c4c4c4" stroke-width="1"/><path d="M4.2 6 H8.5 M4.2 8 H8.5 M4.2 10 H8.5" stroke="#e6e6e6" stroke-width="0.8"/><path d="M4.6 10.8 L7.4 13.6 L13.4 7.2" fill="none" stroke="#2c7a08" stroke-width="3.1" stroke-linecap="round" stroke-linejoin="round"/><path d="M4.6 10.8 L7.4 13.6 L13.4 7.2" fill="none" stroke="#86d01a" stroke-width="1.5" stroke-linecap="round" stroke-linejoin="round"/></svg>

<div class="a t" style="left:106.4px;top:548.5px;font-size:12px;line-height:14px;letter-spacing:0.4px;color:#333;transform:scaleX(0.85);transform-origin:0 0;">Medium</div>
<div class="a t" style="left:199.5px;top:548.5px;font-size:12px;line-height:14px;letter-spacing:0.4px;color:#333;transform:scaleX(0.85);transform-origin:0 0;">CR-210</div>
<svg class="a" style="left:255px;top:549px" width="12" height="16" viewBox="0 0 12 16"><path d="M6 0.2 C3 0.2 0.6 2.5 0.6 5.3 C0.6 7.6 2 8.9 2.9 10.3 L3.6 11.6 H8.4 L9.1 10.3 C10 8.9 11.4 7.6 11.4 5.3 C11.4 2.5 9 0.2 6 0.2z" fill="#95b63a"/><path d="M3.9 5 H8.1 M5 5.2 L5.4 10.8 M7 5.2 L6.6 10.8" stroke="#dfeab8" stroke-width="0.8" fill="none"/><rect x="3.6" y="12.3" width="4.8" height="1.3" fill="#95b63a"/><rect x="3.9" y="14.2" width="4.2" height="1.2" fill="#95b63a"/></svg><svg class="a" style="left:270.5px;top:555px" width="5" height="4" viewBox="0 0 5 4"><path d="M0 0 H5 L2.5 2.90z" fill="#777"/></svg>
<div class="a t" style="left:280px;top:548.5px;font-size:12px;line-height:14px;letter-spacing:0.4px;color:#3b6da6;transform:scaleX(0.85);transform-origin:0 0;">Custom images for discussion groups</div>
<div class="a t" style="left:912px;top:548.5px;font-size:12px;line-height:14px;letter-spacing:0.4px;color:#333;transform:scaleX(0.85);transform-origin:0 0;">Monica Green</div>
<div class="a t" style="left:1030.5px;width:300px;text-align:center;top:548.5px;font-size:12px;line-height:14px;letter-spacing:0.4px;color:#333;transform:scaleX(0.85);transform-origin:50% 0;">07/21/13</div>
<div class="cb" style="left:36px;top:585px"></div>
<svg class="a" style="left:70px;top:582px" width="16" height="17" viewBox="0 0 16 17"><path d="M2.7 2.9 H8.6 L10.3 4.6 V13.3 H2.7z" fill="#fbfbfb" stroke="#c4c4c4" stroke-width="1"/><path d="M4.2 6 H8.5 M4.2 8 H8.5 M4.2 10 H8.5" stroke="#e6e6e6" stroke-width="0.8"/><g stroke="#f0541a" stroke-width="1.2"><path d="M9.9 2 V9 M6.4 5.5 H13.4 M7.4 3 L12.4 8 M12.4 3 L7.4 8"/></g><circle cx="9.9" cy="5.5" r="1.6" fill="#f0541a"/></svg>

<div class="a t" style="left:106.4px;top:582.5px;font-size:12px;line-height:14px;letter-spacing:0.4px;color:#333;transform:scaleX(0.85);transform-origin:0 0;">Medium</div>
<div class="a t" style="left:199.5px;top:582.5px;font-size:12px;line-height:14px;letter-spacing:0.4px;color:#333;transform:scaleX(0.85);transform-origin:0 0;">CR-211</div>
<svg class="a" style="left:255px;top:583px" width="12" height="16" viewBox="0 0 12 16"><path d="M6 0.2 C3 0.2 0.6 2.5 0.6 5.3 C0.6 7.6 2 8.9 2.9 10.3 L3.6 11.6 H8.4 L9.1 10.3 C10 8.9 11.4 7.6 11.4 5.3 C11.4 2.5 9 0.2 6 0.2z" fill="#95b63a"/><path d="M3.9 5 H8.1 M5 5.2 L5.4 10.8 M7 5.2 L6.6 10.8" stroke="#dfeab8" stroke-width="0.8" fill="none"/><rect x="3.6" y="12.3" width="4.8" height="1.3" fill="#95b63a"/><rect x="3.9" y="14.2" width="4.2" height="1.2" fill="#95b63a"/></svg><svg class="a" style="left:270.5px;top:589px" width="5" height="4" viewBox="0 0 5 4"><path d="M0 0 H5 L2.5 2.90z" fill="#777"/></svg>
<div class="a t" style="left:280px;top:582.5px;font-size:12px;line-height:14px;letter-spacing:0.4px;color:#3b6da6;transform:scaleX(0.85);transform-origin:0 0;">Conditional formatting</div>
<div class="a t" style="left:912px;top:582.5px;font-size:12px;line-height:14px;letter-spacing:0.4px;color:#333;transform:scaleX(0.85);transform-origin:0 0;">Monica Green</div>
<div class="a t" style="left:1030.5px;width:300px;text-align:center;top:582.5px;font-size:12px;line-height:14px;letter-spacing:0.4px;color:#333;transform:scaleX(0.85);transform-origin:50% 0;">07/21/13</div>
<div class="cb" style="left:36px;top:619px"></div>
<svg class="a" style="left:70px;top:616px" width="16" height="17" viewBox="0 0 16 17"><path d="M2.7 2.9 H8.6 L10.3 4.6 V13.3 H2.7z" fill="#fbfbfb" stroke="#c4c4c4" stroke-width="1"/><path d="M4.2 6 H8.5 M4.2 8 H8.5 M4.2 10 H8.5" stroke="#e6e6e6" stroke-width="0.8"/><circle cx="9.5" cy="9.5" r="4.6" fill="#0b1fc9"/><path d="M8.9 7.5 L11.3 9.5 L8.9 11.5z" fill="#fff"/></svg>

<div class="a t" style="left:106.4px;top:616.5px;font-size:12px;line-height:14px;letter-spacing:0.4px;color:#333;transform:scaleX(0.85);transform-origin:0 0;">Medium</div>
<div class="a t" style="left:199.5px;top:616.5px;font-size:12px;line-height:14px;letter-spacing:0.4px;color:#333;transform:scaleX(0.85);transform-origin:0 0;">CR-212</div>
<svg class="a" style="left:255px;top:617px" width="12" height="16" viewBox="0 0 12 16"><path d="M6 0.2 C3 0.2 0.6 2.5 0.6 5.3 C0.6 7.6 2 8.9 2.9 10.3 L3.6 11.6 H8.4 L9.1 10.3 C10 8.9 11.4 7.6 11.4 5.3 C11.4 2.5 9 0.2 6 0.2z" fill="#95b63a"/><path d="M3.9 5 H8.1 M5 5.2 L5.4 10.8 M7 5.2 L6.6 10.8" stroke="#dfeab8" stroke-width="0.8" fill="none"/><rect x="3.6" y="12.3" width="4.8" height="1.3" fill="#95b63a"/><rect x="3.9" y="14.2" width="4.2" height="1.2" fill="#95b63a"/></svg><svg class="a" style="left:270.5px;top:623px" width="5" height="4" viewBox="0 0 5 4"><path d="M0 0 H5 L2.5 2.90z" fill="#777"/></svg>
<div class="a t" style="left:280px;top:616.5px;font-size:12px;line-height:14px;letter-spacing:0.4px;color:#3b6da6;transform:scaleX(0.85);transform-origin:0 0;">Allow reorder of rules in customization</div>
<div class="a t" style="left:912px;top:616.5px;font-size:12px;line-height:14px;letter-spacing:0.4px;color:#333;transform:scaleX(0.85);transform-origin:0 0;">Monica Green</div>
<div class="a t" style="left:1030.5px;width:300px;text-align:center;top:616.5px;font-size:12px;line-height:14px;letter-spacing:0.4px;color:#333;transform:scaleX(0.85);transform-origin:50% 0;">07/21/13</div>
<div class="cb" style="left:36px;top:653px"></div>
<svg class="a" style="left:70px;top:650px" width="16" height="17" viewBox="0 0 16 17"><path d="M2.7 2.9 H8.6 L10.3 4.6 V13.3 H2.7z" fill="#fbfbfb" stroke="#c4c4c4" stroke-width="1"/><path d="M4.2 6 H8.5 M4.2 8 H8.5 M4.2 10 H8.5" stroke="#e6e6e6" stroke-width="0.8"/><g stroke="#f0541a" stroke-width="1.2"><path d="M9.9 2 V9 M6.4 5.5 H13.4 M7.4 3 L12.4 8 M12.4 3 L7.4 8"/></g><circle cx="9.9" cy="5.5" r="1.6" fill="#f0541a"/></svg>

<div class="a t" style="left:106.4px;top:650.5px;font-size:12px;line-height:14px;letter-spacing:0.4px;color:#333;transform:scaleX(0.85);transform-origin:0 0;">Medium</div>
<div class="a t" style="left:199.5px;top:650.5px;font-size:12px;line-height:14px;letter-spacing:0.4px;color:#333;transform:scaleX(0.85);transform-origin:0 0;">CR-213</div>
<svg class="a" style="left:255px;top:651px" width="12" height="16" viewBox="0 0 12 16"><path d="M6 0.2 C3 0.2 0.6 2.5 0.6 5.3 C0.6 7.6 2 8.9 2.9 10.3 L3.6 11.6 H8.4 L9.1 10.3 C10 8.9 11.4 7.6 11.4 5.3 C11.4 2.5 9 0.2 6 0.2z" fill="#95b63a"/><path d="M3.9 5 H8.1 M5 5.2 L5.4 10.8 M7 5.2 L6.6 10.8" stroke="#dfeab8" stroke-width="0.8" fill="none"/><rect x="3.6" y="12.3" width="4.8" height="1.3" fill="#95b63a"/><rect x="3.9" y="14.2" width="4.2" height="1.2" fill="#95b63a"/></svg><svg class="a" style="left:270.5px;top:657px" width="5" height="4" viewBox="0 0 5 4"><path d="M0 0 H5 L2.5 2.90z" fill="#777"/></svg>
<div class="a t" style="left:280px;top:650.5px;font-size:12px;line-height:14px;letter-spacing:0.4px;color:#3b6da6;transform:scaleX(0.85);transform-origin:0 0;">Allow dependent pick lists</div>
<div class="a t" style="left:912px;top:650.5px;font-size:12px;line-height:14px;letter-spacing:0.4px;color:#333;transform:scaleX(0.85);transform-origin:0 0;">Monica Green</div>
<div class="a t" style="left:1030.5px;width:300px;text-align:center;top:650.5px;font-size:12px;line-height:14px;letter-spacing:0.4px;color:#333;transform:scaleX(0.85);transform-origin:50% 0;">07/21/13</div>
<div class="cb" style="left:36px;top:687px"></div>
<svg class="a" style="left:70px;top:684px" width="16" height="17" viewBox="0 0 16 17"><path d="M2.7 2.9 H8.6 L10.3 4.6 V13.3 H2.7z" fill="#fbfbfb" stroke="#c4c4c4" stroke-width="1"/><path d="M4.2 6 H8.5 M4.2 8 H8.5 M4.2 10 H8.5" stroke="#e6e6e6" stroke-width="0.8"/><g stroke="#f0541a" stroke-width="1.2"><path d="M9.9 2 V9 M6.4 5.5 H13.4 M7.4 3 L12.4 8 M12.4 3 L7.4 8"/></g><circle cx="9.9" cy="5.5" r="1.6" fill="#f0541a"/></svg>

<div class="a t" style="left:106.4px;top:684.5px;font-size:12px;line-height:14px;letter-spacing:0.4px;color:#333;transform:scaleX(0.85);transform-origin:0 0;">Medium</div>
<div class="a t" style="left:199.5px;top:684.5px;font-size:12px;line-height:14px;letter-spacing:0.4px;color:#333;transform:scaleX(0.85);transform-origin:0 0;">CR-215</div>
<svg class="a" style="left:255px;top:685px" width="12" height="16" viewBox="0 0 12 16"><path d="M6 0.2 C3 0.2 0.6 2.5 0.6 5.3 C0.6 7.6 2 8.9 2.9 10.3 L3.6 11.6 H8.4 L9.1 10.3 C10 8.9 11.4 7.6 11.4 5.3 C11.4 2.5 9 0.2 6 0.2z" fill="#95b63a"/><path d="M3.9 5 H8.1 M5 5.2 L5.4 10.8 M7 5.2 L6.6 10.8" stroke="#dfeab8" stroke-width="0.8" fill="none"/><rect x="3.6" y="12.3" width="4.8" height="1.3" fill="#95b63a"/><rect x="3.9" y="14.2" width="4.2" height="1.2" fill="#95b63a"/></svg><svg class="a" style="left:270.5px;top:691px" width="5" height="4" viewBox="0 0 5 4"><path d="M0 0 H5 L2.5 2.90z" fill="#777"/></svg>
<div class="a t" style="left:280px;top:684.5px;font-size:12px;line-height:14px;letter-spacing:0.4px;color:#3b6da6;transform:scaleX(0.85);transform-origin:0 0;">Add expenses module to mobile solution</div>
<div class="a t" style="left:912px;top:684.5px;font-size:12px;line-height:14px;letter-spacing:0.4px;color:#333;transform:scaleX(0.85);transform-origin:0 0;">Monica Green</div>
<div class="a t" style="left:1030.5px;width:300px;text-align:center;top:684.5px;font-size:12px;line-height:14px;letter-spacing:0.4px;color:#333;transform:scaleX(0.85);transform-origin:50% 0;">07/21/13</div>
<div class="cb" style="left:36px;top:722px"></div>
<svg class="a" style="left:70px;top:719px" width="16" height="17" viewBox="0 0 16 17"><path d="M2.7 2.9 H8.6 L10.3 4.6 V13.3 H2.7z" fill="#fbfbfb" stroke="#c4c4c4" stroke-width="1"/><path d="M4.2 6 H8.5 M4.2 8 H8.5 M4.2 10 H8.5" stroke="#e6e6e6" stroke-width="0.8"/><path d="M8.3 10.5 V8.3 a2 2 0 0 1 4 0 V10.5" fill="none" stroke="#3f7ed8" stroke-width="1.3"/><rect x="6.9" y="10.3" width="6.8" height="5.3" rx="0.8" fill="#fff" stroke="#1d5fd0" stroke-width="1.2"/><rect x="9.8" y="11.6" width="1" height="2.4" fill="#1d5fd0"/></svg>
<svg class="a" style="left:110px;top:721px" width="8" height="12" viewBox="0 0 8 12"><path d="M4 0 L7.8 4.5 H5.2 V11.5 H2.8 V4.5 H0.2z" fill="#f39a10"/></svg>
<div class="a t" style="left:125.5px;top:719.5px;font-size:12px;line-height:14px;letter-spacing:0.4px;color:#333;transform:scaleX(0.85);transform-origin:0 0;">High</div>
<div class="a t" style="left:199.5px;top:719.5px;font-size:12px;line-height:14px;letter-spacing:0.4px;color:#333;transform:scaleX(0.85);transform-origin:0 0;">I-4</div>
<svg class="a" style="left:255px;top:720px" width="12" height="14" viewBox="0 0 12 14"><rect x="0" y="0" width="12" height="14" fill="#8db43c"/><rect x="2.2" y="3" width="1.8" height="5" fill="#fff"/><rect x="2.2" y="9.5" width="1.8" height="1.8" fill="#fff"/><rect x="5.2" y="3" width="5" height="4" fill="#cfe3a8"/><rect x="5.2" y="3" width="1.6" height="8" fill="#cfe3a8"/></svg><svg class="a" style="left:270.5px;top:726px" width="5" height="4" viewBox="0 0 5 4"><path d="M0 0 H5 L2.5 2.90z" fill="#777"/></svg>
<div class="a t" style="left:280px;top:719.5px;font-size:12px;line-height:14px;letter-spacing:0.4px;color:#3b6da6;transform:scaleX(0.85);transform-origin:0 0;">Winter is coming</div>
<div class="a t" style="left:912px;top:719.5px;font-size:12px;line-height:14px;letter-spacing:0.4px;color:#333;transform:scaleX(0.85);transform-origin:0 0;">Hilee Taylor</div>
<div class="a t" style="left:1002px;top:719.5px;font-size:12px;line-height:14px;letter-spacing:0.4px;color:#333;transform:scaleX(0.85);transform-origin:0 0;">Globex</div>
<div class="a t" style="left:1002px;top:734.0px;font-size:12px;line-height:14px;letter-spacing:0.4px;color:#333;transform:scaleX(0.85);transform-origin:0 0;">Implementation</div>
<div class="a t" style="left:967.5px;width:300px;text-align:center;top:719.5px;font-size:12px;line-height:14px;letter-spacing:0.4px;color:#333;transform:scaleX(0.85);transform-origin:50% 0;">07/02/14</div>
<div class="a t" style="left:1030.5px;width:300px;text-align:center;top:719.5px;font-size:12px;line-height:14px;letter-spacing:0.4px;color:#333;transform:scaleX(0.85);transform-origin:50% 0;">06/30/13</div>
<div class="cb" style="left:36px;top:771px"></div>
<svg class="a" style="left:70px;top:768px" width="16" height="17" viewBox="0 0 16 17"><path d="M2.7 2.9 H8.6 L10.3 4.6 V13.3 H2.7z" fill="#fbfbfb" stroke="#c4c4c4" stroke-width="1"/><path d="M4.2 6 H8.5 M4.2 8 H8.5 M4.2 10 H8.5" stroke="#e6e6e6" stroke-width="0.8"/><circle cx="9.5" cy="9.7" r="4" fill="#fff" stroke="#151515" stroke-width="1.3"/><path d="M8.8 7.7 L11.2 9.7 L8.8 11.7z" fill="#111"/></svg>
<svg class="a" style="left:110px;top:768px" width="8" height="16" viewBox="0 0 8 16"><path d="M4 0 L8 4.5 H5.3 V7 H2.7 V4.5 H0z" fill="#d40d12"/><path d="M4 7.5 L8 12 H5.3 V15 H2.7 V12 H0z" fill="#d40d12"/></svg>
<div class="a t" style="left:125.5px;top:768.5px;font-size:12px;line-height:14px;letter-spacing:0.4px;color:#333;transform:scaleX(0.85);transform-origin:0 0;">Critical</div>
<div class="a t" style="left:199.5px;top:768.5px;font-size:12px;line-height:14px;letter-spacing:0.4px;color:#333;transform:scaleX(0.85);transform-origin:0 0;">B-1</div>
<svg class="a" style="left:254px;top:768px" width="14" height="17" viewBox="0 0 14 17"><g stroke="#8ab534" stroke-width="1" fill="none"><path d="M4 1 L5.5 4M10 1 L8.5 4M0.5 6 L3.5 7.5M13.5 6 L10.5 7.5M0.5 11 L3.5 10M13.5 11 L10.5 10M1 16 L4 13M13 16 L10 13"/></g><ellipse cx="7" cy="9.5" rx="3.8" ry="5.5" fill="#8ab534"/><path d="M7 5v9" stroke="#dce9b8" stroke-width="0.8"/></svg><svg class="a" style="left:270.5px;top:775px" width="5" height="4" viewBox="0 0 5 4"><path d="M0 0 H5 L2.5 2.90z" fill="#777"/></svg>
<div class="a t" style="left:280px;top:768.5px;font-size:12px;line-height:14px;letter-spacing:0.4px;color:#3b6da6;transform:scaleX(0.85);transform-origin:0 0;">Validation Error when updating the field</div>
<div class="a t" style="left:912px;top:768.5px;font-size:12px;line-height:14px;letter-spacing:0.4px;color:#333;transform:scaleX(0.85);transform-origin:0 0;">Hilee Taylor</div>
<div class="a t" style="left:1002px;top:768.5px;font-size:12px;line-height:14px;letter-spacing:0.4px;color:#333;transform:scaleX(0.85);transform-origin:0 0;">Globex</div>
<div class="a t" style="left:1002px;top:783.0px;font-size:12px;line-height:14px;letter-spacing:0.4px;color:#333;transform:scaleX(0.85);transform-origin:0 0;">Implementation</div>
<div class="a t" style="left:967.5px;width:300px;text-align:center;top:768.5px;font-size:12px;line-height:14px;letter-spacing:0.4px;color:#333;transform:scaleX(0.85);transform-origin:50% 0;">07/09/13</div>
<div class="a t" style="left:1030.5px;width:300px;text-align:center;top:768.5px;font-size:12px;line-height:14px;letter-spacing:0.4px;color:#333;transform:scaleX(0.85);transform-origin:50% 0;">06/30/13</div>
<div class="a" style="left:28px;top:794px;width:1188px;height:30px;background:#fff;"></div>
<div class="cb" style="left:36px;top:804px"></div>
<svg class="a" style="left:70px;top:801px" width="16" height="17" viewBox="0 0 16 17"><path d="M2.7 2.9 H8.6 L10.3 4.6 V13.3 H2.7z" fill="#fbfbfb" stroke="#c4c4c4" stroke-width="1"/><path d="M4.2 6 H8.5 M4.2 8 H8.5 M4.2 10 H8.5" stroke="#e6e6e6" stroke-width="0.8"/><circle cx="9.5" cy="9.7" r="4" fill="#fff" stroke="#151515" stroke-width="1.3"/><path d="M8.8 7.7 L11.2 9.7 L8.8 11.7z" fill="#111"/></svg>
<svg class="a" style="left:110px;top:801px" width="8" height="16" viewBox="0 0 8 16"><path d="M4 0 L8 4.5 H5.3 V7 H2.7 V4.5 H0z" fill="#d40d12"/><path d="M4 7.5 L8 12 H5.3 V15 H2.7 V12 H0z" fill="#d40d12"/></svg>
<div class="a t" style="left:125.5px;top:801.5px;font-size:12px;line-height:14px;letter-spacing:0.4px;color:#333;transform:scaleX(0.85);transform-origin:0 0;">Critical</div>
<div class="a t" style="left:199.5px;top:801.5px;font-size:12px;line-height:14px;letter-spacing:0.4px;color:#333;transform:scaleX(0.85);transform-origin:0 0;">B-1</div>
<svg class="a" style="left:254px;top:801px" width="14" height="17" viewBox="0 0 14 17"><g stroke="#8ab534" stroke-width="1" fill="none"><path d="M4 1 L5.5 4M10 1 L8.5 4M0.5 6 L3.5 7.5M13.5 6 L10.5 7.5M0.5 11 L3.5 10M13.5 11 L10.5 10M1 16 L4 13M13 16 L10 13"/></g><ellipse cx="7" cy="9.5" rx="3.8" ry="5.5" fill="#8ab534"/><path d="M7 5v9" stroke="#dce9b8" stroke-width="0.8"/></svg><svg class="a" style="left:270.5px;top:808px" width="5" height="4" viewBox="0 0 5 4"><path d="M0 0 H5 L2.5 2.90z" fill="#777"/></svg>
<div class="a t" style="left:280px;top:801.5px;font-size:12px;line-height:14px;letter-spacing:0.4px;color:#3b6da6;transform:scaleX(0.85);transform-origin:0 0;">Validation Error when updating the field</div>
<div class="a t" style="left:912px;top:801.5px;font-size:12px;line-height:14px;letter-spacing:0.4px;color:#333;transform:scaleX(0.85);transform-origin:0 0;">Hilee Taylor</div>
<div class="a t" style="left:1002px;top:801.5px;font-size:12px;line-height:14px;letter-spacing:0.4px;color:#333;transform:scaleX(0.85);transform-origin:0 0;">Globex</div>
<div class="a t" style="left:1002px;top:816.0px;font-size:12px;line-height:14px;letter-spacing:0.4px;color:#333;transform:scaleX(0.85);transform-origin:0 0;">Implementation</div>
<div class="a t" style="left:967.5px;width:300px;text-align:center;top:801.5px;font-size:12px;line-height:14px;letter-spacing:0.4px;color:#333;transform:scaleX(0.85);transform-origin:50% 0;">07/09/13</div>
<div class="a t" style="left:1030.5px;width:300px;text-align:center;top:801.5px;font-size:12px;line-height:14px;letter-spacing:0.4px;color:#333;transform:scaleX(0.85);transform-origin:50% 0;">06/30/13</div>
<div class="cb" style="left:36px;top:847px"></div>
<svg class="a" style="left:70px;top:844px" width="16" height="17" viewBox="0 0 16 17"><path d="M2.7 2.9 H8.6 L10.3 4.6 V13.3 H2.7z" fill="#fbfbfb" stroke="#c4c4c4" stroke-width="1"/><path d="M4.2 6 H8.5 M4.2 8 H8.5 M4.2 10 H8.5" stroke="#e6e6e6" stroke-width="0.8"/><circle cx="9.5" cy="9.7" r="4" fill="#fff" stroke="#151515" stroke-width="1.3"/><path d="M8.8 7.7 L11.2 9.7 L8.8 11.7z" fill="#111"/></svg>
<svg class="a" style="left:110px;top:844px" width="8" height="16" viewBox="0 0 8 16"><path d="M4 0 L8 4.5 H5.3 V7 H2.7 V4.5 H0z" fill="#d40d12"/><path d="M4 7.5 L8 12 H5.3 V15 H2.7 V12 H0z" fill="#d40d12"/></svg>
<div class="a t" style="left:125.5px;top:844.5px;font-size:12px;line-height:14px;letter-spacing:0.4px;color:#333;transform:scaleX(0.85);transform-origin:0 0;">Critical</div>
<div class="a t" style="left:199.5px;top:844.5px;font-size:12px;line-height:14px;letter-spacing:0.4px;color:#333;transform:scaleX(0.85);transform-origin:0 0;">B-1</div>
<svg class="a" style="left:254px;top:844px" width="14" height="17" viewBox="0 0 14 17"><g stroke="#8ab534" stroke-width="1" fill="none"><path d="M4 1 L5.5 4M10 1 L8.5 4M0.5 6 L3.5 7.5M13.5 6 L10.5 7.5M0.5 11 L3.5 10M13.5 11 L10.5 10M1 16 L4 13M13 16 L10 13"/></g><ellipse cx="7" cy="9.5" rx="3.8" ry="5.5" fill="#8ab534"/><path d="M7 5v9" stroke="#dce9b8" stroke-width="0.8"/></svg><svg class="a" style="left:270.5px;top:851px" width="5" height="4" viewBox="0 0 5 4"><path d="M0 0 H5 L2.5 2.90z" fill="#777"/></svg>
<div class="a t" style="left:280px;top:844.5px;font-size:12px;line-height:14px;letter-spacing:0.4px;color:#3b6da6;transform:scaleX(0.85);transform-origin:0 0;">Validation Error when updating the field</div>
<div class="a t" style="left:912px;top:844.5px;font-size:12px;line-height:14px;letter-spacing:0.4px;color:#333;transform:scaleX(0.85);transform-origin:0 0;">Hilee Taylor</div>
<div class="a t" style="left:1002px;top:844.5px;font-size:12px;line-height:14px;letter-spacing:0.4px;color:#333;transform:scaleX(0.85);transform-origin:0 0;">Globex</div>
<div class="a t" style="left:1002px;top:859.0px;font-size:12px;line-height:14px;letter-spacing:0.4px;color:#333;transform:scaleX(0.85);transform-origin:0 0;">Implementation</div>
<div class="a t" style="left:967.5px;width:300px;text-align:center;top:844.5px;font-size:12px;line-height:14px;letter-spacing:0.4px;color:#333;transform:scaleX(0.85);transform-origin:50% 0;">07/09/13</div>
<div class="a t" style="left:1030.5px;width:300px;text-align:center;top:844.5px;font-size:12px;line-height:14px;letter-spacing:0.4px;color:#333;transform:scaleX(0.85);transform-origin:50% 0;">06/30/13</div>
<div class="a" style="left:1217px;top:79px;width:283px;height:766px;background:#fff;"></div>
<svg class="a" style="left:1230px;top:86px" width="20" height="31" viewBox="0 0 20 31"><path d="M10 1.2 C4.8 1.2 0.9 5 0.9 9.8 C0.9 13.5 3.3 16 5 18.3 L6.5 20.6 H13.7 L15.2 18.3 C16.9 16 19.3 13.5 19.3 9.8 C19.3 5 15.2 1.2 10 1.2z" fill="#95b63a"/><path d="M6.3 11 H13.9 M8.3 11.2 L9 20.3 M11.9 11.2 L11.2 20.3" stroke="#f2f7e4" stroke-width="0.9" fill="none"/><rect x="6.5" y="21.6" width="7.2" height="1.2" fill="#95b63a"/><rect x="6.5" y="23.8" width="7.2" height="1.2" fill="#95b63a"/><rect x="6.5" y="25.9" width="7.2" height="1.2" fill="#95b63a"/><ellipse cx="10.1" cy="28.8" rx="3.1" ry="1" fill="#95b63a"/></svg>
<div class="a t" style="left:1261.5px;top:88.0px;font-size:16px;line-height:20px;color:#333;font-weight:normal;">Fix the dev environment to</div>
<div class="a t" style="left:1261.5px;top:108.0px;font-size:16px;line-height:20px;color:#333;font-weight:normal;">show the new feature</div>
<svg class="a" style="left:1260px;top:133px" width="14" height="14" viewBox="0 0 14 14"><circle cx="7" cy="7" r="6.6" fill="#1a7ac4"/><rect x="6" y="6" width="2.2" height="5" fill="#fff"/><rect x="6" y="3" width="2.2" height="2" fill="#fff"/><rect x="5" y="10.2" width="4.2" height="1.2" fill="#fff"/></svg>
<div class="a t" style="left:1277.5px;top:133.8px;font-size:10px;line-height:13px;color:#3b6da6;font-weight:normal;font-size:10.6px;letter-spacing:0.3px;transform:scaleX(0.87);transform-origin:0 0;">More info</div>
<div class="a t" style="left:1325.5px;top:133.3px;font-size:10px;line-height:13px;color:#777;font-weight:normal;font-size:10.6px;letter-spacing:0.3px;transform:scaleX(0.87);transform-origin:0 0;">·</div>
<div class="a t" style="left:1334px;top:133.8px;font-size:10px;line-height:13px;color:#3b6da6;font-weight:normal;font-size:10.6px;letter-spacing:0.3px;transform:scaleX(0.87);transform-origin:0 0;">Like</div>
<div class="a t" style="left:1357px;top:133.3px;font-size:10px;line-height:13px;color:#777;font-weight:normal;font-size:10.6px;letter-spacing:0.3px;transform:scaleX(0.87);transform-origin:0 0;">·</div>
<svg class="a" style="left:1369px;top:131px" width="17" height="15" viewBox="0 0 17 15"><rect x="0.8" y="6" width="3.5" height="8.2" fill="#1a6bb5"/><path d="M5 6.5 L8.3 2.2 C8.8 1 10.5 1.2 10.4 2.8 L9.8 5.8 H14.3 C15.6 5.8 16.2 7 15.8 8 L14.4 13 C14.1 13.8 13.5 14.2 12.7 14.2 H5z" fill="#fff" stroke="#1a6bb5" stroke-width="1.2"/></svg>
<div class="a t" style="left:1389px;top:133.8px;font-size:10px;line-height:13px;color:#3b6da6;font-weight:normal;font-size:10.6px;letter-spacing:0.3px;transform:scaleX(0.87);transform-origin:0 0;">3</div>
<div class="a" style="left:1217px;top:159px;width:137px;height:1px;background:#d2d2d2;"></div>
<div class="a" style="left:1369px;top:159px;width:131px;height:1px;background:#d2d2d2;"></div>
<svg class="a" style="left:1353px;top:158px" width="17" height="9" viewBox="0 0 17 9"><path d="M0 1.5 L8.5 8 L17 1.5" fill="#fff" stroke="#d2d2d2" stroke-width="1"/></svg>
<div class="a t" style="left:1238px;top:170.0px;font-size:13px;line-height:17px;color:#555;font-weight:normal;transform:scaleX(0.865);transform-origin:0 0;">3 CUSTOMERS</div>
<svg class="a" style="left:1483px;top:172px" width="12" height="12" viewBox="0 0 12 12"><path d="M1.8 10.2 L4.6 7.4 M7.4 4.6 L10.2 1.8" stroke="#666" stroke-width="1.1"/><path d="M6.8 1 H11 V5.2z" fill="#666"/><path d="M1 6.8 V11 H5.2z" fill="#666"/></svg>
<div class="btn" style="left:1239px;top:198px;width:35px;height:18px;"></div>
<div class="a t" style="left:1106.5px;width:300px;text-align:center;top:200.3px;font-size:10px;line-height:13px;color:#444;font-weight:normal;font-size:10.6px;letter-spacing:0.3px;transform:scaleX(0.87);transform-origin:50% 0;">Add</div>
<svg class="a" style="left:1274px;top:231px" width="14" height="13" viewBox="0 0 14 13"><path d="M1 9 C4 9 7 7 9 3 L12 1 L12.5 10 C10 12 5 12.5 1.5 11.5z" fill="#c51a1a"/><path d="M9 3 L12 1 L12.5 6z" fill="#eee"/></svg>
<svg class="a" style="left:1290px;top:237px" width="5" height="4" viewBox="0 0 5 4"><path d="M0 0 H5 L2.5 2.90z" fill="#777"/></svg>
<div class="a t" style="left:1131px;width:300px;text-align:center;top:246.8px;font-size:10px;line-height:13px;color:#3b6da6;font-weight:normal;font-size:10.6px;letter-spacing:0.3px;transform:scaleX(0.87);transform-origin:50% 0;">Globex</div>
<div class="a t" style="left:1131px;width:300px;text-align:center;top:263.3px;font-size:10px;line-height:13px;color:#333;font-weight:normal;font-size:10.6px;letter-spacing:0.3px;transform:scaleX(0.87);transform-origin:50% 0;">Yes</div>
<div class="a t" style="left:1131px;width:300px;text-align:center;top:279.3px;font-size:10px;line-height:13px;color:#333;font-weight:normal;font-size:10.6px;letter-spacing:0.3px;transform:scaleX(0.87);transform-origin:50% 0;">07/22/13</div>
<svg class="a" style="left:1347px;top:232px" width="14" height="11" viewBox="0 0 14 11"><path d="M1 8 C1 5.5 2.5 4.5 4 4 L5.5 1.5 H9.5 L11.5 4 C12.5 4.5 13.3 5.5 13.3 8z" fill="#cc2020"/><circle cx="4" cy="8.5" r="1.8" fill="#222"/><circle cx="10.5" cy="8.5" r="1.8" fill="#222"/><rect x="6" y="2.5" width="3" height="2" fill="#bde"/></svg>
<svg class="a" style="left:1363px;top:237px" width="5" height="4" viewBox="0 0 5 4"><path d="M0 0 H5 L2.5 2.90z" fill="#777"/></svg>
<div class="a t" style="left:1204.8px;width:300px;text-align:center;top:246.8px;font-size:10px;line-height:13px;color:#3b6da6;font-weight:normal;font-size:10.6px;letter-spacing:0.3px;transform:scaleX(0.87);transform-origin:50% 0;">Susita</div>
<div class="a t" style="left:1204.8px;width:300px;text-align:center;top:263.3px;font-size:10px;line-height:13px;color:#333;font-weight:normal;font-size:10.6px;letter-spacing:0.3px;transform:scaleX(0.87);transform-origin:50% 0;">No</div>
<div class="a t" style="left:1204.8px;width:300px;text-align:center;top:279.3px;font-size:10px;line-height:13px;color:#333;font-weight:normal;font-size:10.6px;letter-spacing:0.3px;transform:scaleX(0.87);transform-origin:50% 0;">07/18/13</div>
<svg class="a" style="left:1422px;top:231px" width="14" height="11" viewBox="0 0 14 11"><rect x="0" y="0" width="14" height="11" fill="#222"/><ellipse cx="7" cy="6" rx="6" ry="3" fill="#e9873a"/><path d="M2 4 L10 3 L12 5z" fill="#f6c36a"/></svg>
<svg class="a" style="left:1438px;top:237px" width="5" height="4" viewBox="0 0 5 4"><path d="M0 0 H5 L2.5 2.90z" fill="#777"/></svg>
<div class="a t" style="left:1279px;width:300px;text-align:center;top:246.8px;font-size:10px;line-height:13px;color:#3b6da6;font-weight:normal;font-size:10.6px;letter-spacing:0.3px;transform:scaleX(0.87);transform-origin:50% 0;">Tivol</div>
<div class="a t" style="left:1279px;width:300px;text-align:center;top:263.3px;font-size:10px;line-height:13px;color:#333;font-weight:normal;font-size:10.6px;letter-spacing:0.3px;transform:scaleX(0.87);transform-origin:50% 0;">No</div>
<div class="a t" style="left:1279px;width:300px;text-align:center;top:279.3px;font-size:10px;line-height:13px;color:#333;font-weight:normal;font-size:10.6px;letter-spacing:0.3px;transform:scaleX(0.87);transform-origin:50% 0;">07/26/13</div>
<div class="a" style="left:1217px;top:330px;width:283px;height:1px;background:#d2d2d2;"></div>
<div class="a t" style="left:1239px;top:341.8px;font-size:13px;line-height:17px;color:#555;font-weight:normal;transform:scaleX(0.865);transform-origin:0 0;">DISCUSSIONS</div>
<svg class="a" style="left:1483px;top:343.5px" width="12" height="12" viewBox="0 0 12 12"><path d="M1.8 10.2 L4.6 7.4 M7.4 4.6 L10.2 1.8" stroke="#666" stroke-width="1.1"/><path d="M6.8 1 H11 V5.2z" fill="#666"/><path d="M1 6.8 V11 H5.2z" fill="#666"/></svg>
<div class="a t" style="left:1226px;top:369.0px;font-size:11px;line-height:14px;color:#2d7cc4;font-weight:normal;">Update</div>
<div class="a" style="left:1226px;top:392px;width:270px;height:35px;border:1px solid #c6c6c6;box-sizing:border-box;background:#fff;"></div>
<svg class="a" style="left:1235px;top:387px" width="24" height="7" viewBox="0 0 24 7"><path d="M0 6 L11.5 0.8 L23 6" fill="#fff" stroke="#c6c6c6" stroke-width="1"/></svg>
<div class="a t" style="left:1235.5px;top:401.0px;font-size:13px;line-height:17px;color:#888;font-weight:normal;">Start a discussion...</div>
<svg class="a" style="left:1346px;top:453px" width="30" height="29" viewBox="0 0 30 29"><ellipse cx="15" cy="12" rx="14.3" ry="11.5" fill="#a6a6a6"/><path d="M13 20 L15 28.5 L21 20z" fill="#a6a6a6"/><circle cx="8.5" cy="12" r="2.3" fill="#fff"/><circle cx="15" cy="12" r="2.3" fill="#fff"/><circle cx="21.5" cy="12" r="2.3" fill="#fff"/></svg>
<div class="a t" style="left:1211.5px;width:300px;text-align:center;top:482.3px;font-size:10px;line-height:13px;color:#999;font-weight:normal;font-size:10.6px;letter-spacing:0.3px;transform:scaleX(0.87);transform-origin:50% 0;">No Discussions Yet</div>
<div class="a" style="left:1217px;top:522px;width:283px;height:1px;background:#d2d2d2;"></div>
<div class="a t" style="left:1238.5px;top:533.5px;font-size:13px;line-height:17px;color:#555;font-weight:normal;transform:scaleX(0.87);transform-origin:0 0;">7 FOLLOWERS</div>
<svg class="a" style="left:1483px;top:535.5px" width="12" height="12" viewBox="0 0 12 12"><path d="M1.8 10.2 L4.6 7.4 M7.4 4.6 L10.2 1.8" stroke="#666" stroke-width="1.1"/><path d="M6.8 1 H11 V5.2z" fill="#666"/><path d="M1 6.8 V11 H5.2z" fill="#666"/></svg>
<svg class="a" style="left:1273px;top:572px" width="14" height="15" viewBox="0 0 14 15"><rect width="14" height="15" fill="#8a5a50"/><ellipse cx="7" cy="7" rx="3.5" ry="4.5" fill="#2a1a14"/><ellipse cx="7" cy="7.5" rx="2.4" ry="3.2" fill="#d9b4a0"/><rect y="11.5" width="14" height="3.5" fill="#e8e0d8"/></svg>
<svg class="a" style="left:1289px;top:578px" width="5" height="4" viewBox="0 0 5 4"><path d="M0 0 H5 L2.5 2.90z" fill="#777"/></svg>
<div class="a t" style="left:1130.5px;width:300px;text-align:center;top:588.0px;font-size:10px;line-height:13px;color:#3b6da6;font-weight:normal;font-size:10.6px;letter-spacing:0.3px;transform:scaleX(0.87);transform-origin:50% 0;">Rachel John...</div>
<div class="a t" style="left:1130.5px;width:300px;text-align:center;top:604.1px;font-size:10px;line-height:13px;color:#333;font-weight:normal;font-size:10.6px;letter-spacing:0.3px;transform:scaleX(0.87);transform-origin:50% 0;">rachel@clari...</div>
<svg class="a" style="left:1347px;top:572px" width="14" height="15" viewBox="0 0 14 15"><rect width="14" height="15" fill="#f0f0ea"/><path d="M2 15 C2 6 3.5 1 7 1 C10.5 1 12 6 12 15z" fill="#1a1410"/><ellipse cx="7" cy="8" rx="2.6" ry="3.5" fill="#c8a080"/></svg>
<svg class="a" style="left:1363px;top:578px" width="5" height="4" viewBox="0 0 5 4"><path d="M0 0 H5 L2.5 2.90z" fill="#777"/></svg>
<div class="a t" style="left:1204.7px;width:300px;text-align:center;top:588.0px;font-size:10px;line-height:13px;color:#3b6da6;font-weight:normal;font-size:10.6px;letter-spacing:0.3px;transform:scaleX(0.87);transform-origin:50% 0;">Hilee Taylor</div>
<div class="a t" style="left:1204.7px;width:300px;text-align:center;top:604.1px;font-size:10px;line-height:13px;color:#333;font-weight:normal;font-size:10.6px;letter-spacing:0.3px;transform:scaleX(0.87);transform-origin:50% 0;">ella@clarize...</div>
<div class="a t" style="left:1204.7px;width:300px;text-align:center;top:620.5px;font-size:10px;line-height:13px;color:#333;font-weight:normal;font-size:10.6px;letter-spacing:0.3px;transform:scaleX(0.87);transform-origin:50% 0;">Director</div>
<svg class="a" style="left:1383px;top:619px" width="5" height="5" viewBox="0 0 5 5"><path d="M0 0 H5 V5z" fill="#1a6bb5"/></svg>
<svg class="a" style="left:1422px;top:572px" width="14" height="14" viewBox="0 0 14 14"><circle cx="7" cy="4.5" r="4.5" fill="#151515"/><ellipse cx="7" cy="7.5" rx="3" ry="3.5" fill="#6a4028"/><path d="M2.5 14 C3 11.5 5 11 7 11 S11 11.5 11.5 14z" fill="#5a1a2a"/></svg>
<svg class="a" style="left:1438px;top:578px" width="5" height="4" viewBox="0 0 5 4"><path d="M0 0 H5 L2.5 2.90z" fill="#777"/></svg>
<div class="a t" style="left:1279.2px;width:300px;text-align:center;top:588.0px;font-size:10px;line-height:13px;color:#3b6da6;font-weight:normal;font-size:10.6px;letter-spacing:0.3px;transform:scaleX(0.87);transform-origin:50% 0;">Monica Green</div>
<div class="a t" style="left:1279.2px;width:300px;text-align:center;top:604.1px;font-size:10px;line-height:13px;color:#333;font-weight:normal;font-size:10.6px;letter-spacing:0.3px;transform:scaleX(0.87);transform-origin:50% 0;">rachel.hada...</div>
<div class="a t" style="left:1279.2px;width:300px;text-align:center;top:620.5px;font-size:10px;line-height:13px;color:#333;font-weight:normal;font-size:10.6px;letter-spacing:0.3px;transform:scaleX(0.87);transform-origin:50% 0;">Manager</div>
<svg class="a" style="left:1458px;top:619px" width="5" height="5" viewBox="0 0 5 5"><path d="M0 0 H5 V5z" fill="#1a6bb5"/></svg>
<svg class="a" style="left:1273px;top:646px" width="14" height="15" viewBox="0 0 14 15"><rect width="14" height="15" fill="#2a5a3a"/><ellipse cx="7" cy="8" rx="4.5" ry="6" fill="#1a1410"/><ellipse cx="7" cy="7.5" rx="2.3" ry="3" fill="#c09070"/><rect y="12" width="14" height="3" fill="#444"/></svg>
<svg class="a" style="left:1289px;top:652px" width="5" height="4" viewBox="0 0 5 4"><path d="M0 0 H5 L2.5 2.90z" fill="#777"/></svg>
<div class="a t" style="left:1130.5px;width:300px;text-align:center;top:662.0px;font-size:10px;line-height:13px;color:#3b6da6;font-weight:normal;font-size:10.6px;letter-spacing:0.3px;transform:scaleX(0.87);transform-origin:50% 0;">Helena Carter</div>
<div class="a t" style="left:1130.5px;width:300px;text-align:center;top:678.1px;font-size:10px;line-height:13px;color:#333;font-weight:normal;font-size:10.6px;letter-spacing:0.3px;transform:scaleX(0.87);transform-origin:50% 0;">helena@clar...</div>
<svg class="a" style="left:1347px;top:646px" width="14" height="15" viewBox="0 0 14 15"><rect width="14" height="15" fill="#2a2018"/><ellipse cx="7" cy="7" rx="3" ry="4" fill="#d0a888"/><path d="M4 4 C4 1.5 10 1.5 10 4z" fill="#111"/><path d="M2 15 L5 11 H9 L12 15z" fill="#ddd"/></svg>
<svg class="a" style="left:1363px;top:652px" width="5" height="4" viewBox="0 0 5 4"><path d="M0 0 H5 L2.5 2.90z" fill="#777"/></svg>
<div class="a t" style="left:1204.7px;width:300px;text-align:center;top:662.0px;font-size:10px;line-height:13px;color:#3b6da6;font-weight:normal;font-size:10.6px;letter-spacing:0.3px;transform:scaleX(0.87);transform-origin:50% 0;">Rami Cohen</div>
<div class="a t" style="left:1204.7px;width:300px;text-align:center;top:678.1px;font-size:10px;line-height:13px;color:#333;font-weight:normal;font-size:10.6px;letter-spacing:0.3px;transform:scaleX(0.87);transform-origin:50% 0;">rami@clariz...</div>
<svg class="a" style="left:1422px;top:646px" width="14" height="15" viewBox="0 0 14 15"><path d="M1.5 15 C1.5 5 3 0.5 7 0.5 C11 0.5 12.5 5 12.5 15z" fill="#151010"/><ellipse cx="7" cy="7.5" rx="2.8" ry="3.8" fill="#c89070"/></svg>
<svg class="a" style="left:1438px;top:652px" width="5" height="4" viewBox="0 0 5 4"><path d="M0 0 H5 L2.5 2.90z" fill="#777"/></svg>
<div class="a t" style="left:1279.2px;width:300px;text-align:center;top:662.0px;font-size:10px;line-height:13px;color:#3b6da6;font-weight:normal;font-size:10.6px;letter-spacing:0.3px;transform:scaleX(0.87);transform-origin:50% 0;">Anna Wu</div>
<div class="a t" style="left:1279.2px;width:300px;text-align:center;top:678.1px;font-size:10px;line-height:13px;color:#333;font-weight:normal;font-size:10.6px;letter-spacing:0.3px;transform:scaleX(0.87);transform-origin:50% 0;">lan.bui@clari...</div>
<div class="a t" style="left:1088px;width:400px;text-align:right;top:740.8px;font-size:10px;line-height:13px;color:#2d6ea8;font-weight:normal;font-size:10.6px;letter-spacing:0.3px;transform:scaleX(0.87);transform-origin:100% 0;">See All</div>
<svg class="a" style="left:1491px;top:743px" width="4" height="7" viewBox="0 0 4 7"><path d="M0 0 L3.5 3.5 L0 7z" fill="#2d6ea8"/></svg>
<div class="a" style="left:1217px;top:767px;width:283px;height:1px;background:#d2d2d2;"></div>
<div class="a t" style="left:1238px;top:777.8px;font-size:13px;line-height:17px;color:#555;font-weight:normal;transform:scaleX(0.87);transform-origin:0 0;">7 TEAM MEMBERS</div>
<svg class="a" style="left:1483px;top:779.5px" width="12" height="12" viewBox="0 0 12 12"><path d="M1.8 10.2 L4.6 7.4 M7.4 4.6 L10.2 1.8" stroke="#666" stroke-width="1.1"/><path d="M6.8 1 H11 V5.2z" fill="#666"/><path d="M1 6.8 V11 H5.2z" fill="#666"/></svg>
<div class="btn" style="left:1239px;top:805px;width:35px;height:18px;"></div>
<div class="a t" style="left:1106.5px;width:300px;text-align:center;top:807.3px;font-size:10px;line-height:13px;color:#444;font-weight:normal;font-size:10.6px;letter-spacing:0.3px;transform:scaleX(0.87);transform-origin:50% 0;">Add</div>
<svg class="a" style="left:1274px;top:838px" width="14" height="15" viewBox="0 0 14 15"><path d="M1.5 15 C1.5 5 3 0.5 7 0.5 C11 0.5 12.5 5 12.5 15z" fill="#151010"/><ellipse cx="7" cy="7.5" rx="2.8" ry="3.8" fill="#c89070"/></svg>
<svg class="a" style="left:1347px;top:838px" width="14" height="15" viewBox="0 0 14 15"><rect width="14" height="15" fill="#f0f0ea"/><path d="M2 15 C2 6 3.5 1 7 1 C10.5 1 12 6 12 15z" fill="#1a1410"/><ellipse cx="7" cy="8" rx="2.6" ry="3.5" fill="#c8a080"/></svg>
<svg class="a" style="left:1421px;top:838px" width="14" height="15" viewBox="0 0 14 15"><rect width="14" height="15" fill="#8a5a50"/><ellipse cx="7" cy="7" rx="3.5" ry="4.5" fill="#2a1a14"/><ellipse cx="7" cy="7.5" rx="2.4" ry="3.2" fill="#d9b4a0"/><rect y="11.5" width="14" height="3.5" fill="#e8e0d8"/></svg>
</body></html>
